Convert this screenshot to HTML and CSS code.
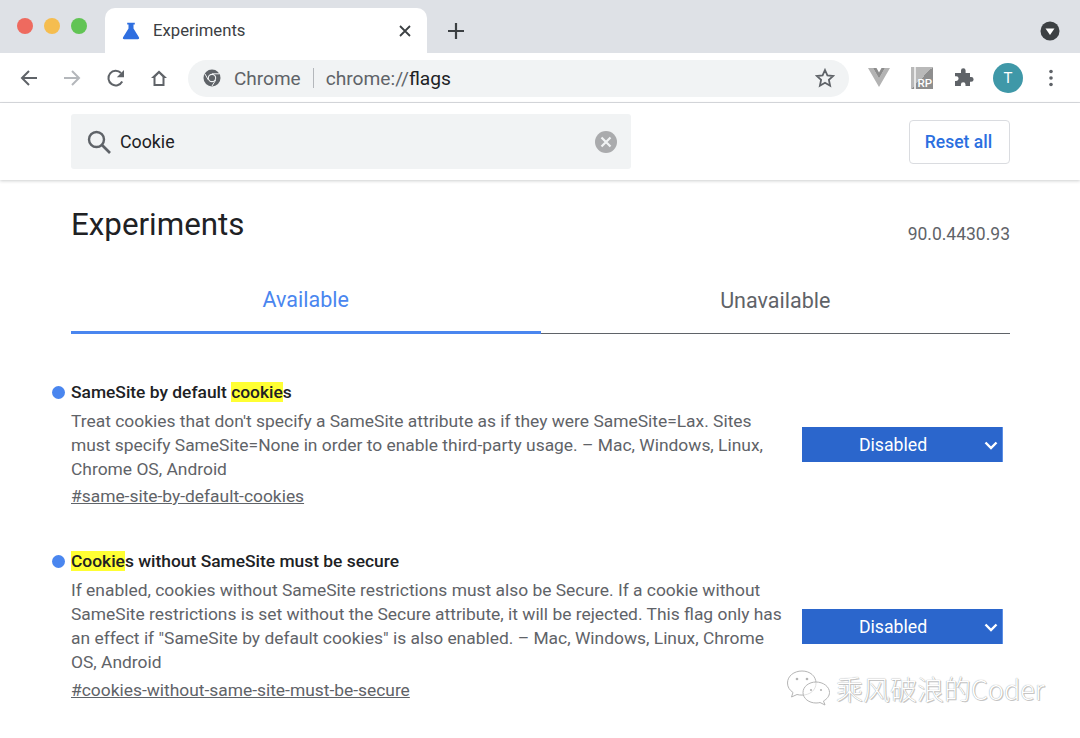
FILE: index.html
```html
<!DOCTYPE html>
<html lang="en">
<head>
<meta charset="utf-8">
<title>Experiments</title>
<link rel="stylesheet" href="styles.css">
</head>
<body>
<div class="tabstrip">
  <div class="lights"><span class="light red"></span><span class="light yellow"></span><span class="light green"></span></div>
  <div class="tab">
    <svg class="flask" viewBox="0 0 18 18" width="18" height="18"><path fill="#2f6fe0" d="M5.200 .8h7.600v1.800h-1.300v3.800l5.400 8.900c.6 1 0 2-1.100 2H2.200c-1.100 0-1.700-1-1.100-2l5.400-8.900V2.600H5.200z"/></svg>
    <span class="tab-title">Experiments</span>
    <svg class="tab-close" viewBox="0 0 12 12" width="12" height="12"><path d="M1 1l10 10M11 1L1 11" stroke="#3c4043" stroke-width="1.800" fill="none"/></svg>
  </div>
  <svg class="newtab" viewBox="0 0 16 16" width="16" height="16"><path d="M8 0v16M0 8h16" stroke="#3c4043" stroke-width="2.200" fill="none"/></svg>
  <div class="strip-space"></div>
  <svg class="tabmenu" viewBox="0 0 20 20" width="20" height="20"><circle cx="10" cy="10" r="9.500" fill="#3c4043"/><path d="M5.500 7.500h9L10 14z" fill="#fff"/></svg>
</div>
<div class="toolbar">
  <svg class="navicon" viewBox="0 0 20 20" width="20" height="20"><path d="M18 10H3M10 3l-7 7 7 7" stroke="#5f6368" stroke-width="2" fill="none"/></svg>
  <svg class="navicon" viewBox="0 0 20 20" width="20" height="20"><path d="M2 10h15M10 3l7 7-7 7" stroke="#b4b7bb" stroke-width="2" fill="none"/></svg>
  <svg class="navicon" viewBox="0 0 20 20" width="20" height="20"><path d="M16.200 13.500A7.300 7.300 0 1 1 15 5" stroke="#5f6368" stroke-width="2" fill="none"/><path d="M18 2v7.200h-7.200z" fill="#5f6368"/></svg>
  <svg class="navicon" viewBox="0 0 20 20" width="20" height="20"><path d="M10 2.500L2 10h2.500v8h11v-8H18zM6.500 16v-7L10 5.500 13.500 9v7z" fill="#5f6368" fill-rule="evenodd"/></svg>
  <div class="omnibox">
    <svg class="chrome-logo" viewBox="0 0 18 18" width="18" height="18"><circle cx="9" cy="9" r="8.500" fill="#5f6368"/><circle cx="9" cy="9" r="4.200" fill="#f1f3f4"/><circle cx="9" cy="9" r="3.100" fill="#5f6368"/><path d="M9 4.800h7M5.400 11L2 5M12.700 11.100L9 17" stroke="#f1f3f4" stroke-width="1"/></svg>
    <span class="omni-chrome">Chrome</span>
    <span class="omni-sep"></span>
    <span class="omni-url">chrome://<span class="omni-path">flags</span></span>
    <svg class="star" viewBox="0 0 20 20" width="20" height="20"><path d="M10 2l2.400 5.400 5.800.6-4.300 3.900 1.200 5.800L10 14.700l-5.100 3 1.200-5.800L1.800 8l5.800-.6z" stroke="#5f6368" stroke-width="1.800" fill="none"/></svg>
  </div>
  <div class="extensions">
    <svg class="ext-vue" viewBox="0 0 22 20" width="22" height="20"><path d="M0 0h5l6 10.500L17 0h5L11 19z" fill="#b3b3b3"/><path d="M5 0h3.500L11 4.500 13.500 0H17l-6 10.500z" fill="#8c8c8c"/></svg>
    <div class="ext-rp"><span class="rp-spine"></span><span class="rp-label">RP</span></div>
    <svg class="ext-puzzle" viewBox="0 0 20 20" width="20" height="20"><path d="M7 2.500a2.300 2.300 0 0 1 4.600 0V5h4.400v4h1.200a2.400 2.400 0 0 1 0 4.800H16V18H11.500v-1.500a2.300 2.300 0 0 0-4.600 0V18H1v-5h1.200a2.400 2.400 0 0 0 0-4.800H1V5h6z" fill="#5f6368"/></svg>
    <div class="avatar">T</div>
    <svg class="kebab" viewBox="0 0 4 18" width="4" height="18"><circle cx="2" cy="2.500" r="1.800" fill="#5f6368"/><circle cx="2" cy="9" r="1.800" fill="#5f6368"/><circle cx="2" cy="15.500" r="1.800" fill="#5f6368"/></svg>
  </div>
</div>
<header class="search-header">
  <div class="searchbox">
    <svg class="search-icon" viewBox="0 0 26 26" width="26" height="26"><circle cx="10.500" cy="10.500" r="7.500" stroke="#5f6368" stroke-width="2.400" fill="none"/><path d="M16 16l8 8" stroke="#5f6368" stroke-width="2.600"/></svg>
    <span class="search-text">Cookie</span>
    <svg class="search-clear" viewBox="0 0 22 22" width="22" height="22"><circle cx="11" cy="11" r="11" fill="#aaabad"/><path d="M6.500 6.500l9 9M15.500 6.500l-9 9" stroke="#f1f3f4" stroke-width="2.200"/></svg>
  </div>
  <button class="reset">Reset all</button>
</header>
<main class="content">
  <div class="title-row">
    <h1>Experiments</h1>
    <span class="version">90.0.4430.93</span>
  </div>
  <div class="tabs">
    <div class="tabitem active">Available</div>
    <div class="tabitem">Unavailable</div>
  </div>
  <section class="flag first">
    <div class="flag-text">
      <h2><span class="dot"></span>SameSite by default <mark>cookie</mark>s</h2>
      <p>Treat cookies that don't specify a SameSite attribute as if they were SameSite=Lax. Sites<br>must specify SameSite=None in order to enable third-party usage. – Mac, Windows, Linux,<br>Chrome OS, Android</p>
      <a href="#same-site-by-default-cookies">#same-site-by-default-cookies</a>
    </div>
    <div class="select">Disabled<svg class="chev" viewBox="0 0 14 9" width="14" height="9"><path d="M1.500 1.500L7 7l5.500-5.500" stroke="#fff" stroke-width="2.400" fill="none"/></svg></div>
  </section>
  <section class="flag second">
    <div class="flag-text">
      <h2><span class="dot"></span><mark>Cookie</mark>s without SameSite must be secure</h2>
      <p>If enabled, cookies without SameSite restrictions must also be Secure. If a cookie without<br>SameSite restrictions is set without the Secure attribute, it will be rejected. This flag only has<br>an effect if "SameSite by default cookies" is also enabled. – Mac, Windows, Linux, Chrome<br>OS, Android</p>
      <a href="#cookies-without-same-site-must-be-secure">#cookies-without-same-site-must-be-secure</a>
    </div>
    <div class="select">Disabled<svg class="chev" viewBox="0 0 14 9" width="14" height="9"><path d="M1.500 1.500L7 7l5.500-5.500" stroke="#fff" stroke-width="2.400" fill="none"/></svg></div>
  </section>
</main>
<div class="watermark">
  <svg viewBox="0 0 46 38" width="46" height="38"><g fill="#ffffff" fill-opacity=".6" stroke="#b5b5b5" stroke-width="1"><path d="M16 1C8 1 1.500 6 1.500 13c0 4 2 7 5.500 9.500L5.500 27l5.500-2.500c1.500.4 3 .6 5 .6 8 0 14-5 14-12S24 1 16 1z"/><path d="M30 12c-7 0-13 4.500-13 10.500S23 33 30 33c1.500 0 3-.2 4-.5l5 2.500-1.500-4c3.500-2 6-5 6-8.500C43.500 16.500 37 12 30 12z"/></g><g fill="#b5b5b5"><circle cx="11" cy="9" r="1.300"/><circle cx="21" cy="9" r="1.300"/><circle cx="25" cy="20" r="1.100"/><circle cx="35" cy="20" r="1.100"/></g></svg>
  <span>乘风破浪的Coder</span>
</div>
</body>
</html>
```
FILE: styles.css
```css
* { box-sizing: border-box; }
html, body { margin: 0; height: 738px; overflow: hidden; background: #fff; }
body { font-family: Roboto, "Liberation Sans", sans-serif; color: #202124; position: relative; }

.tabstrip { display: flex; align-items: flex-end; height: 53px; background: #dee1e6; }
.lights { display: flex; gap: 11px; align-self: flex-start; padding: 18px 0 0 17px; width: 105px; }
.light { width: 16px; height: 16px; border-radius: 50%; }
.red { background: #ee6a5f; }
.yellow { background: #f5bd4f; }
.green { background: #61c454; }
.tab { display: flex; align-items: center; width: 322px; height: 45px; background: #fff; border-radius: 10px 10px 0 0; padding: 0 16px 0 17px; }
.flask { flex: none; }
.tab-title { flex: 1; margin-left: 13px; font-size: 16.700px; color: #3c4043; }
.newtab { align-self: flex-start; margin: 23px 0 0 21px; }
.strip-space { flex: 1; }
.tabmenu { align-self: flex-start; margin: 21px 20px 0 0; }

.toolbar { display: flex; align-items: center; height: 50px; padding: 0 0 0 19px; background: #fff; border-bottom: 1px solid #dadce0; }
.navicon { margin-right: 23px; flex: none; }
.navicon:nth-child(2) { margin-right: 24px; }
.navicon:nth-child(4) { margin-right: 20px; }
.omnibox { display: flex; align-items: center; width: 661px; height: 37px; margin-top: 1px; margin-left: -1px; background: #f1f3f4; border-radius: 19px; padding: 0 14px 0 15px; }
.omni-chrome { margin-left: 13px; font-size: 19px; color: #5f6368; }
.omni-sep { width: 1px; height: 20px; margin: 0 12px 0 12px; background: #b4b7bb; }
.omni-url { flex: 1; font-size: 19.200px; color: #5f6368; }
.omni-path { color: #202124; }
.extensions { display: flex; align-items: center; flex: 1; padding-left: 19px; }
.ext-vue { margin-right: 21px; }
.ext-rp { position: relative; width: 22px; height: 22px; background: linear-gradient(135deg, #b9b9b9 50%, #8e8e8e 50%); margin-right: 21px; }
.rp-spine { position: absolute; left: 3px; top: 0; width: 2px; height: 22px; background: #e8e8e8; }
.rp-label { position: absolute; right: 1px; bottom: 0; font-size: 11.500px; line-height: 11px; color: #fff; font-weight: 500; }
.ext-puzzle { margin-right: 19px; }
.avatar { width: 30px; height: 30px; border-radius: 50%; background: #3f98a8; color: #fff; font-size: 15px; line-height: 30px; text-align: center; margin-right: 26px; }

.search-header { display: flex; align-items: flex-start; justify-content: space-between; height: 77px; padding: 11px 70px 0 71px; background: #fff; box-shadow: 0 1px 3px rgba(60, 64, 67, .25); position: relative; }
.searchbox { display: flex; align-items: center; width: 560px; height: 55px; padding: 0 14px 0 15px; background: #f1f3f4; border-radius: 3px; }
.search-text { flex: 1; margin-left: 8px; font-size: 17.800px; color: #202124; }
.reset { width: 101px; height: 44px; margin-top: 6px; padding: 0 2px 0 0; background: #fff; border: 1px solid #dadce0; border-radius: 4px; color: #2b6fe0; font: 500 17.500px Roboto, sans-serif; }

.content { padding: 0 70px 0 71px; }
.title-row { display: flex; justify-content: space-between; align-items: flex-start; height: 87px; }
h1 { margin: 26px 0 0; font-size: 31.300px; font-weight: 400; line-height: 38px; color: #202124; }
.version { margin-top: 42px; font-size: 17.500px; line-height: 24px; color: #5f6368; }
.tabs { display: flex; height: 67px; }
.tabitem { flex: 1; padding-top: 21px; text-align: center; font-size: 21.500px; line-height: 26px; color: #5f6368; border-bottom: 1px solid #5f6368; }
.tabitem.active { color: #4a86ef; border-bottom: 3px solid #4a86ef; padding-top: 20px; }

.flag { display: flex; }
.first { margin-top: 46px; height: 169px; }
.second { height: 160px; }
.flag-text { width: 731px; flex: none; }
h2 { position: relative; margin: 0; font-size: 17.400px; font-weight: 500; line-height: 24px; color: #202124; }
.dot { position: absolute; left: -19px; top: 6px; width: 13px; height: 13px; border-radius: 50%; background: #4a86ef; }
mark { background: #ffff33; color: inherit; }
p { margin: 5px 0 2px; font-size: 17.420px; line-height: 24px; color: #5f6368; }
a { display: block; font-size: 17.400px; line-height: 26px; color: #5f6368; text-decoration: underline; }
.second a { margin-top: 3px; }
.select { display: flex; align-items: center; justify-content: center; position: relative; flex: none; width: 201px; height: 35px; padding-right: 18px; background: #2b66cc; border-right: 1px solid #5b8fe6; color: #fff; font-size: 17.700px; }
.first .select { margin-top: 47px; }
.second .select { margin-top: 60px; }
.chev { position: absolute; right: 4px; top: 14px; }

.watermark { position: absolute; left: 786px; top: 670px; display: flex; align-items: center; gap: 4px; }
.watermark span { font: 300 27px "Noto Sans CJK SC", Roboto, sans-serif; line-height: 38px; color: #fff; text-shadow: 0 0 1px #888, 1px 1px 0 #ccc; }
```
